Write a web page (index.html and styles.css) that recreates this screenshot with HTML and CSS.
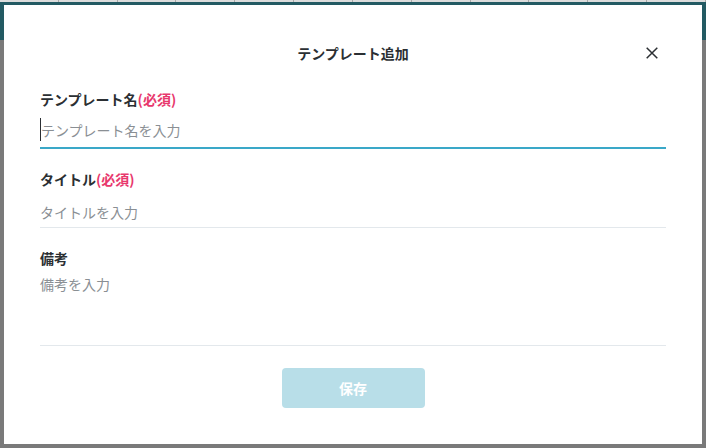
FILE: index.html
```html
<!DOCTYPE html>
<html lang="ja">
<head>
<meta charset="utf-8">
<title>テンプレート追加</title>
<link rel="stylesheet" href="styles.css">
</head>
<body>
<div class="page">
  <div class="strip">
    <span></span><span></span><span></span><span></span><span></span><span></span><span></span><span></span><span></span><span></span><span></span><span></span>
  </div>
  <div class="band"></div>
  <div class="rest"></div>
</div>

<div class="dialog">
  <div class="dialog-header">
    <span></span>
    <h1 class="dialog-title">テンプレート追加</h1>
    <button class="close" aria-label="閉じる">
      <svg width="12" height="12" viewBox="0 0 12 12"><path d="M0.7 0.7L11.3 11.3M11.3 0.7L0.7 11.3" stroke="#2b2f33" stroke-width="1.5" fill="none"/></svg>
    </button>
  </div>

  <div class="field field-first">
    <div class="label">テンプレート名<span class="req">(必須)</span></div>
    <div class="input input-active"><span class="caret"></span><span class="ph">テンプレート名を入力</span></div>
  </div>

  <div class="field">
    <div class="label">タイトル<span class="req">(必須)</span></div>
    <div class="input input-plain"><span class="ph">タイトルを入力</span></div>
  </div>

  <div class="field">
    <div class="label">備考</div>
    <div class="textarea"><span class="ph">備考を入力</span></div>
  </div>

  <div class="actions">
    <button class="save">保存</button>
  </div>
</div>
</body>
</html>
```

FILE: styles.css
```css
html, body {
  margin: 0;
  padding: 0;
}
body {
  width: 706px;
  height: 448px;
  overflow: hidden;
  font-family: "Noto Sans CJK JP", "Noto Sans", sans-serif;
  background: #7a7a7a;
}
.page {
  display: flex;
  flex-direction: column;
  height: 448px;
}
.strip {
  height: 2px;
  display: flex;
  background: #dcdcdc;
}
.strip span {
  width: 61px;
  border-right: 1px solid #a8a8a8;
}
.band {
  height: 38px;
  background: #235a63;
}
.rest {
  flex: 1;
  background: #7a7a7a;
}

.dialog {
  position: fixed;
  left: 4px;
  top: 5px;
  width: 698px;
  height: 439px;
  box-sizing: border-box;
  background: #fff;
  padding: 0 36px;
  display: flex;
  flex-direction: column;
}
.dialog-header {
  margin-top: 38px;
  height: 20px;
  display: grid;
  grid-template-columns: 1fr auto 1fr;
  align-items: center;
}
.dialog-title {
  margin: 0;
  font-size: 14px;
  line-height: 20px;
  font-weight: 700;
  color: #2b2f33;
}
.close {
  justify-self: end;
  margin-right: 8px;
  padding: 0;
  border: 0;
  background: none;
  width: 12px;
  height: 12px;
  display: flex;
}

.field {
  margin-top: 20px;
  display: flex;
  flex-direction: column;
}
.field-first {
  margin-top: 26px;
}
.label {
  font-size: 14px;
  line-height: 20px;
  font-weight: 700;
  color: #2b2f33;
}
.req {
  color: #e8386d;
}
.ph {
  font-size: 14px;
  line-height: 20px;
  color: #8a8f94;
}
.input {
  margin-top: 3px;
  display: flex;
  align-items: center;
  position: relative;
}
.input-active {
  padding: 8px 0 7px;
  border-bottom: 2px solid #3aa8c8;
}
.input-plain {
  padding: 10px 0 5px;
  border-bottom: 1px solid #e3e8ec;
}
.caret {
  width: 1px;
  height: 23px;
  background: #2b2f33;
  position: absolute;
  left: 0;
  top: 6px;
}
.input-active .ph {
  padding-left: 1px;
}
.textarea {
  padding-top: 3px;
  height: 74px;
  border-bottom: 1px solid #e3e8ec;
}

.actions {
  margin-top: 22px;
  display: flex;
  justify-content: center;
}
.save {
  width: 143px;
  height: 40px;
  border: 0;
  border-radius: 4px;
  background: #b8dee8;
  color: #fff;
  font-family: "Noto Sans CJK JP", sans-serif;
  font-size: 14px;
  font-weight: 700;
}
```
